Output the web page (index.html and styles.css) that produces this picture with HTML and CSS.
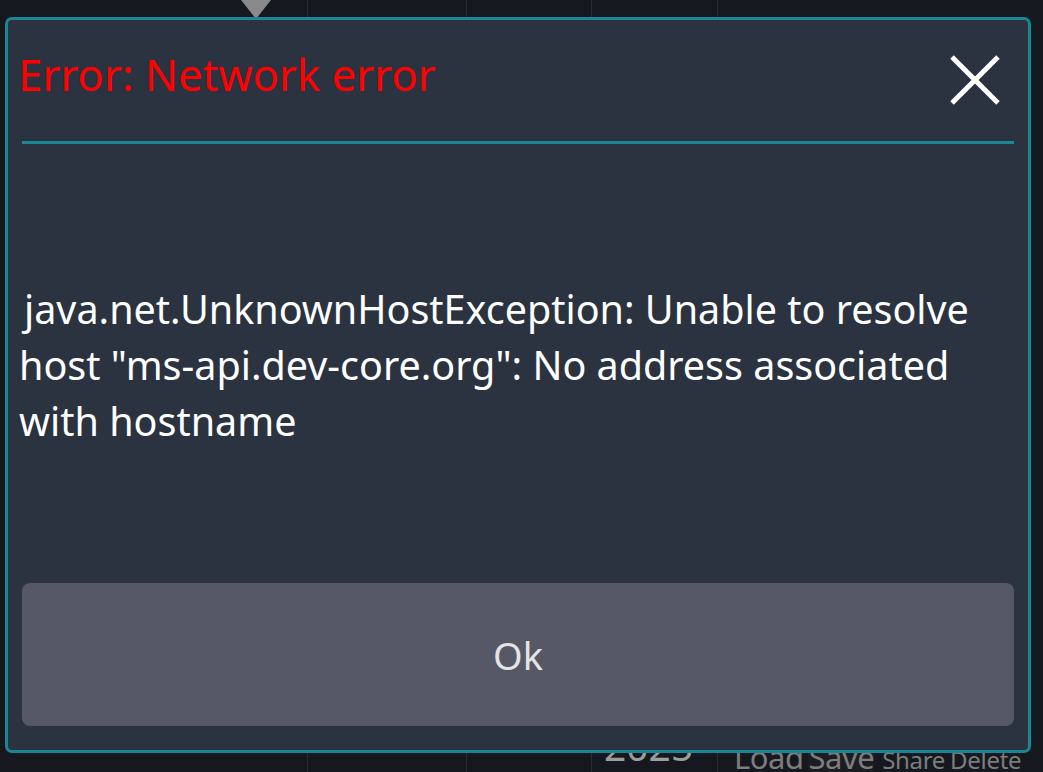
FILE: index.html
```html
<!DOCTYPE html>
<html>
<head>
<meta charset="utf-8">
<link rel="stylesheet" href="styles.css">
</head>
<body>
<div class="app">
  <div class="grid">
    <div class="col c1"><div class="marker"></div></div>
    <div class="col c2"></div>
    <div class="col c3"></div>
    <div class="col c4"><span class="year">2025</span></div>
    <div class="col c5">
      <div class="toolbar">
        <span class="tb big">Load</span>
        <span class="tb big save">Save</span>
        <span class="tb small">Share</span>
        <span class="tb small">Delete</span>
      </div>
    </div>
  </div>
</div>

<div class="dialog">
  <div class="head">
    <h1 class="title">Error: Network error</h1>
    <button class="close" aria-label="Close">
      <svg width="50" height="50" viewBox="0 0 50 50"><path d="M2 2 L48 48 M48 2 L2 48" stroke="#ffffff" stroke-width="5" fill="none"/></svg>
    </button>
  </div>
  <div class="divider"></div>
  <div class="body">
    <p class="msg">java.net.UnknownHostException: Unable to resolve host "ms-api.dev-core.org": No address associated with hostname</p>
  </div>
  <button class="ok">Ok</button>
</div>
</body>
</html>
```

FILE: styles.css
```css
html, body {
  margin: 0;
  padding: 0;
}
body {
  width: 1043px;
  height: 772px;
  overflow: hidden;
  background: #16181f;
  font-family: "Noto Sans", "Open Sans", sans-serif;
  position: relative;
}
.app {
  height: 772px;
}
.grid {
  display: flex;
  height: 100%;
}
.col {
  position: relative;
  height: 100%;
  box-sizing: border-box;
}
.c1 { width: 307px; }
.c2 { width: 159px; border-left: 1px solid #2a2c33; }
.c3 { width: 125px; border-left: 1px solid #2a2c33; }
.c4 { width: 126px; border-left: 1px solid #2a2c33; }
.c5 { flex: 1; border-left: 1px solid #2a2c33; }
.marker {
  position: absolute;
  left: 241px;
  top: 0;
  width: 0;
  height: 0;
  border-left: 15px solid transparent;
  border-right: 15px solid transparent;
  border-top: 19px solid #8a8a8a;
}
.year {
  position: absolute;
  left: 12px;
  top: 726px;
  font-size: 39px;
  color: #9d9d9d;
  line-height: 1;
}
.toolbar {
  position: absolute;
  left: 16px;
  top: 742px;
  display: flex;
  align-items: baseline;
  gap: 5px;
  color: #7d7d7d;
  line-height: 1;
  white-space: nowrap;
}
.tb.big { font-size: 31px; letter-spacing: -0.5px; }
.tb.small { font-size: 24px; letter-spacing: -0.3px; }
.tb.save { background: #1c1d22; margin-right: 3px; }

.dialog {
  position: absolute;
  left: 5px;
  top: 17px;
  width: 1026px;
  height: 736px;
  box-sizing: border-box;
  border: 3px solid #1a8796;
  border-radius: 7px;
  background: #2b3240;
  padding: 0 14px 24px 14px;
  display: flex;
  flex-direction: column;
}
.head {
  display: flex;
  align-items: center;
  justify-content: space-between;
  height: 121px;
}
.title {
  margin: -13px 0 0 -4px;
  font-weight: 400;
  font-size: 43.6px;
  color: #ff0000;
}
.close {
  background: none;
  border: 0;
  padding: 0;
  width: 50px;
  height: 50px;
  margin-right: 14px;
  margin-top: -2px;
  display: flex;
}
.divider {
  height: 3px;
  background: #1a8796;
}
.body {
  flex: 1;
  display: flex;
  align-items: center;
}
.msg {
  margin: 2px 0 0 -3px;
  max-width: 980px;
  color: #ffffff;
  font-size: 39.5px;
  line-height: 56px;
  text-indent: 5px;
}
.ok {
  height: 143px;
  border: 0;
  border-radius: 8px;
  background: #575865;
  color: #e4e4e6;
  font-family: "Noto Sans", "Open Sans", sans-serif;
  font-size: 38px;
  width: 100%;
}
```
